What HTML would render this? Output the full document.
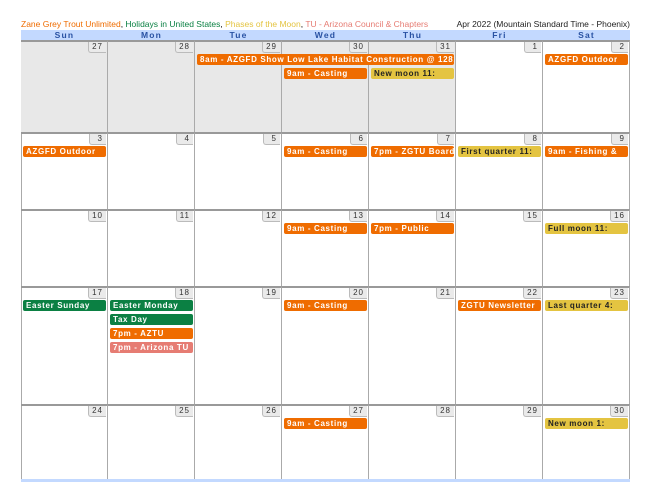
<!DOCTYPE html><html><head><style>
body{margin:0;width:650px;height:502px;background:#fff;font-family:"Liberation Sans",Arial,sans-serif;position:relative;overflow:hidden}
.a{position:absolute}
.t{top:19px;font-size:8.5px;white-space:nowrap}
.h{top:30px;height:10px;background:#c3d9ff;font-size:8.5px;font-weight:bold;color:#2952a3;letter-spacing:1.2px;text-align:center;line-height:10px}
.c{position:absolute;border-right:1px solid #aaa;border-top:2px solid #999;box-sizing:border-box}
.c.g{background:#e8e8e8}
.d{position:absolute;right:1px;top:0;height:10px;padding:0 3px;min-width:10px;background:#eaeaea;border-left:1px solid #bbb;border-bottom:1px solid #bbb;border-radius:0 0 0 3px;font-size:8px;line-height:10px;color:#333;letter-spacing:1px;text-align:right}
.e{position:absolute;height:11px;line-height:11px;font-size:8px;font-weight:bold;color:#fff;letter-spacing:0.65px;padding-left:3px;box-sizing:border-box;border-radius:2px;white-space:nowrap;overflow:hidden;z-index:2}
.o{background:#ef6c00}.gr{background:#0b8043}.y{background:#e4c441;color:#222}.p{background:#e67c73}
</style></head><body>
<div class="a t" style="left:21px"><span style="color:#ef6c00">Zane Grey Trout Unlimited</span>, <span style="color:#0b8043">Holidays in United States</span>, <span style="color:#e4c441">Phases of the Moon</span>, <span style="color:#e67c73">TU - Arizona Council &amp; Chapters</span></div>
<div class="a t" style="right:20px;color:#222">Apr 2022 (Mountain Standard Time - Phoenix)</div>
<div class="a" style="left:21px;top:30px;width:609px;height:10px;background:#c3d9ff"></div>
<div class="a h" style="left:21px;width:87px">Sun</div><div class="a h" style="left:108px;width:87px">Mon</div><div class="a h" style="left:195px;width:87px">Tue</div><div class="a h" style="left:282px;width:87px">Wed</div><div class="a h" style="left:369px;width:87px">Thu</div><div class="a h" style="left:456px;width:87px">Fri</div><div class="a h" style="left:543px;width:87px">Sat</div>
<div class="a" style="left:21px;top:40px;width:1px;height:440px;background:#aaa"></div>
<div class="a" style="left:21px;top:479px;width:609px;height:3px;background:#c3d9ff"></div>
<div id="g"></div>
<script>
var rows=[40,132,209,286,404,479],cols=[21,108,195,282,369,456,543,630];
var days=[[27,28,29,30,31,1,2],[3,4,5,6,7,8,9],[10,11,12,13,14,15,16],[17,18,19,20,21,22,23],[24,25,26,27,28,29,30]];
var h='';
for(var r=0;r<5;r++)for(var c=0;c<7;c++){var gray=r==0&&c<5;h+='<div class="c'+(gray?' g':'')+'" style="left:'+cols[c]+'px;top:'+rows[r]+'px;width:'+(cols[c+1]-cols[c])+'px;height:'+(rows[r+1]-rows[r])+'px"><div class="d">'+days[r][c]+'</div></div>';}
var ev=[[0,2,0,'o','8am - AZGFD Show Low Lake Habitat Construction @ 1281 E',3],[0,6,0,'o','AZGFD Outdoor'],[0,3,1,'o','9am - Casting'],[0,4,1,'y','New moon 11:'],
[1,0,0,'o','AZGFD Outdoor'],[1,3,0,'o','9am - Casting'],[1,4,0,'o','7pm - ZGTU Board'],[1,5,0,'y','First quarter 11:'],[1,6,0,'o','9am - Fishing &amp;'],
[2,3,0,'o','9am - Casting'],[2,4,0,'o','7pm - Public'],[2,6,0,'y','Full moon 11:'],
[3,0,0,'gr','Easter Sunday'],[3,1,0,'gr','Easter Monday'],[3,1,1,'gr','Tax Day'],[3,1,2,'o','7pm - AZTU'],[3,1,3,'p','7pm - Arizona TU'],[3,3,0,'o','9am - Casting'],[3,5,0,'o','ZGTU Newsletter'],[3,6,0,'y','Last quarter 4:'],
[4,3,0,'o','9am - Casting'],[4,6,0,'y','New moon 1:']];
ev.forEach(function(e){var span=e[5]||1;var l=cols[e[1]]+2,w=cols[e[1]+span]-cols[e[1]]-4;h+='<div class="e '+e[3]+'" style="left:'+l+'px;top:'+(rows[e[0]]+14+e[2]*14)+'px;width:'+w+'px">'+e[4]+'</div>';});
document.getElementById('g').innerHTML=h;
</script>
</body></html>
